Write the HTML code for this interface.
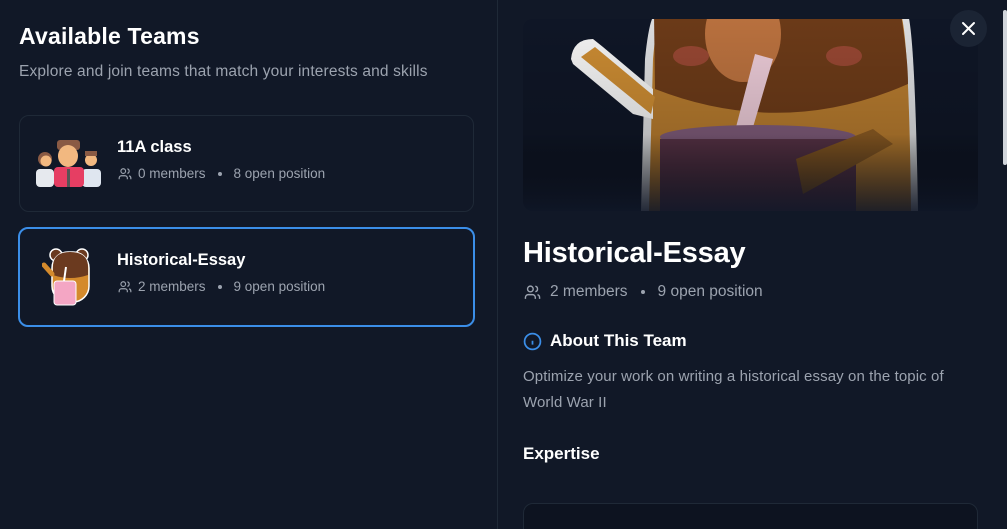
<!DOCTYPE html>
<html style="overflow:hidden;height:529px"><head><meta charset="utf-8"><style>
*{margin:0;padding:0;box-sizing:border-box}
html,body{overflow:hidden}
body{width:1007px;height:529px;background:#111827;font-family:"Liberation Sans",sans-serif;color:#fff;position:relative}
.left{position:absolute;left:0;top:0;width:498px;height:529px;background:#111827;border-right:1px solid #1f2937}
h1{position:absolute;left:19px;top:23px;font-size:23px;font-weight:700;letter-spacing:0.2px}
.sub{position:absolute;left:19px;top:63px;font-size:15.5px;color:#9ca3af;letter-spacing:0.15px}
.card{position:absolute;left:19px;width:455px;height:97px;border:1px solid #1f2937;border-radius:10px}
.card.sel{border:2px solid #3b8ee8;left:18px;width:457px;height:100px}
.ct{position:absolute;left:97px;font-size:16.5px;font-weight:700}
.cm{position:absolute;left:97px;font-size:13.5px;color:#9ca3af;display:flex;align-items:center;gap:5px}
.dot{display:inline-block;width:4px;height:4px;border-radius:2px;background:#9ca3af;margin:0 7px}
.right{position:absolute;left:499px;top:0;width:503px;height:529px;overflow:hidden}
.img{position:absolute;left:24px;top:19px;width:455px;height:192px;border-radius:10px;overflow:hidden;background:#0f1626}
.close{position:absolute;left:950px;top:10px;width:37px;height:37px;border-radius:50%;background:#1b2434}
.thumb{position:absolute;left:1003px;top:10px;width:4px;height:155px;background:#d1d5db;border-radius:2px}
</style></head><body>
<div class="left">
<h1>Available Teams</h1>
<div class="sub">Explore and join teams that match your interests and skills</div>
<div class="card" style="top:115px">
 <svg style="position:absolute;left:16px;top:23px" width="66" height="48" viewBox="0 0 66 48">
  <circle cx="9" cy="20" r="7" fill="#8a5a44"/><circle cx="10" cy="22" r="5.5" fill="#f2b880"/><rect x="0" y="30" width="18" height="18" rx="4" fill="#e6e9ee"/>
  <circle cx="55" cy="21" r="6" fill="#f2b880"/><rect x="49" y="12" width="12" height="5" fill="#8a5a44"/><rect x="46" y="30" width="19" height="18" rx="4" fill="#dfe6f0"/>
  <rect x="21" y="1" width="23" height="10" rx="3" fill="#8a5a44"/><ellipse cx="32" cy="17" rx="10" ry="11" fill="#f2b880"/><rect x="18" y="28" width="30" height="20" rx="4" fill="#e63e63"/><rect x="31" y="30" width="3" height="18" fill="#555"/>
 </svg>
 <div class="ct" style="top:22px">11A class</div>
 <div class="cm" style="top:50px"><svg width="16" height="14" viewBox="0 0 24 24" fill="none" stroke="#9ca3af" stroke-width="2"><circle cx="9" cy="7" r="4"/><path d="M2 21v-2a4 4 0 0 1 4-4h6a4 4 0 0 1 4 4v2M16 3.1a4 4 0 0 1 0 7.8M22 21v-2a4 4 0 0 0-3-3.9"/></svg>0 members<span class="dot"></span>8 open position</div>
</div>
<div class="card sel" style="top:227px">
 <svg style="position:absolute;left:22px;top:18px" width="52" height="60" viewBox="0 0 52 60">
  <circle cx="14" cy="8" r="6" fill="#6b3a1f" stroke="#fff" stroke-width="1.5"/><circle cx="40" cy="8" r="6" fill="#6b3a1f" stroke="#fff" stroke-width="1.5"/>
  <rect x="10" y="5" width="37" height="50" rx="16" fill="#d48a2c" stroke="#fff" stroke-width="1.5"/>
  <path d="M11 28 Q28 34 46 28 L46 20 Q46 5 28 5 Q11 5 11 20z" fill="#6b3a1f"/>
  <path d="M10 27 L2 18" stroke="#d48a2c" stroke-width="5" stroke-linecap="round"/>
  <rect x="12" y="34" width="22" height="24" rx="3" fill="#f4a6c4" stroke="#fff"/><line x1="24" y1="20" x2="22" y2="34" stroke="#fff" stroke-width="2"/>
 </svg>
 <div class="ct" style="top:22px">Historical-Essay</div>
 <div class="cm" style="top:50px"><svg width="16" height="14" viewBox="0 0 24 24" fill="none" stroke="#9ca3af" stroke-width="2"><circle cx="9" cy="7" r="4"/><path d="M2 21v-2a4 4 0 0 1 4-4h6a4 4 0 0 1 4 4v2M16 3.1a4 4 0 0 1 0 7.8M22 21v-2a4 4 0 0 0-3-3.9"/></svg>2 members<span class="dot"></span>9 open position</div>
</div>
</div>
<div class="right">
 <div class="img">
  <svg width="455" height="192" viewBox="0 0 455 192">
   <defs><linearGradient id="f" x1="0" y1="0" x2="0" y2="1"><stop offset="0" stop-color="#000" stop-opacity="0"/><stop offset="0.6" stop-color="#000" stop-opacity="0.15"/><stop offset="1" stop-color="#0f1626" stop-opacity="0.9"/></linearGradient></defs>
   <path d="M118 192 L122 40 Q126 0 132 -5 L385 -5 Q392 20 395 192z" fill="#fff" opacity="0.85"/>
   <path d="M126 192 L130 40 Q133 5 138 -5 L378 -5 Q386 20 388 192z" fill="#b57a2e"/>
   <path d="M131 -5 L378 -5 Q385 40 385 65 Q260 120 132 70z" fill="#6b3a18"/>
   <ellipse cx="220" cy="15" rx="38" ry="48" fill="#b8703e"/>
   <ellipse cx="168" cy="37" rx="18" ry="10" fill="#a04a3a" opacity="0.8"/><ellipse cx="321" cy="37" rx="18" ry="10" fill="#a04a3a" opacity="0.8"/>
   <path d="M48 40 Q50 20 70 20 L80 28 L130 70 L130 100 L110 95 L50 45z" fill="#f2f2f2"/>
   <path d="M58 38 L72 28 L132 78 L128 95z" fill="#c98a32"/>
   <path d="M232 35 L250 40 L228 115 L212 112z" fill="#e8c8d4"/>
   <ellipse cx="235" cy="118" rx="98" ry="12" fill="#7d5a78"/>
   <rect x="137" y="120" width="196" height="72" fill="#5a3448"/>
   <path d="M273 140 L350 110 L370 125 L280 175z" fill="#8a5a22"/>
   <rect x="0" y="0" width="455" height="192" fill="url(#f)"/>
  </svg>
 </div>
 <div style="position:absolute;left:24px;top:237px;font-size:29px;font-weight:700;letter-spacing:-0.2px">Historical-Essay</div>
 <div style="position:absolute;left:24px;top:283px;font-size:15.5px;color:#9ca3af;display:flex;align-items:center;gap:8px"><svg width="19" height="17" viewBox="0 0 24 24" fill="none" stroke="#9ca3af" stroke-width="2"><circle cx="9" cy="7" r="4"/><path d="M2 21v-2a4 4 0 0 1 4-4h6a4 4 0 0 1 4 4v2M16 3.1a4 4 0 0 1 0 7.8M22 21v-2a4 4 0 0 0-3-3.9"/></svg>2 members<span class="dot" style="margin:0 5px"></span>9 open position</div>
 <div style="position:absolute;left:24px;top:331px;font-size:17px;font-weight:700;display:flex;align-items:center;gap:8px"><svg width="19" height="19" viewBox="0 0 24 24" fill="none" stroke="#3b8ee8" stroke-width="2.2"><circle cx="12" cy="12" r="10"/><path d="M12 16v-5M12 8h.01"/></svg>About This Team</div>
 <div style="position:absolute;left:24px;top:364px;width:455px;font-size:15px;line-height:26px;color:#9ca3af;letter-spacing:0.1px">Optimize your work on writing a historical essay on the topic of World War II</div>
 <div style="position:absolute;left:24px;top:444px;font-size:17px;font-weight:700">Expertise</div>
 <div style="position:absolute;left:24px;top:503px;width:455px;height:40px;border:1px solid #1f2937;border-radius:10px;background:#0d1320"></div>
</div>
<div class="close"><svg width="37" height="37" viewBox="0 0 37 37"><path d="M13 13L24 24M24 13L13 24" stroke="#fff" stroke-width="2" stroke-linecap="round"/></svg></div>
<div class="thumb"></div>
</body></html>
